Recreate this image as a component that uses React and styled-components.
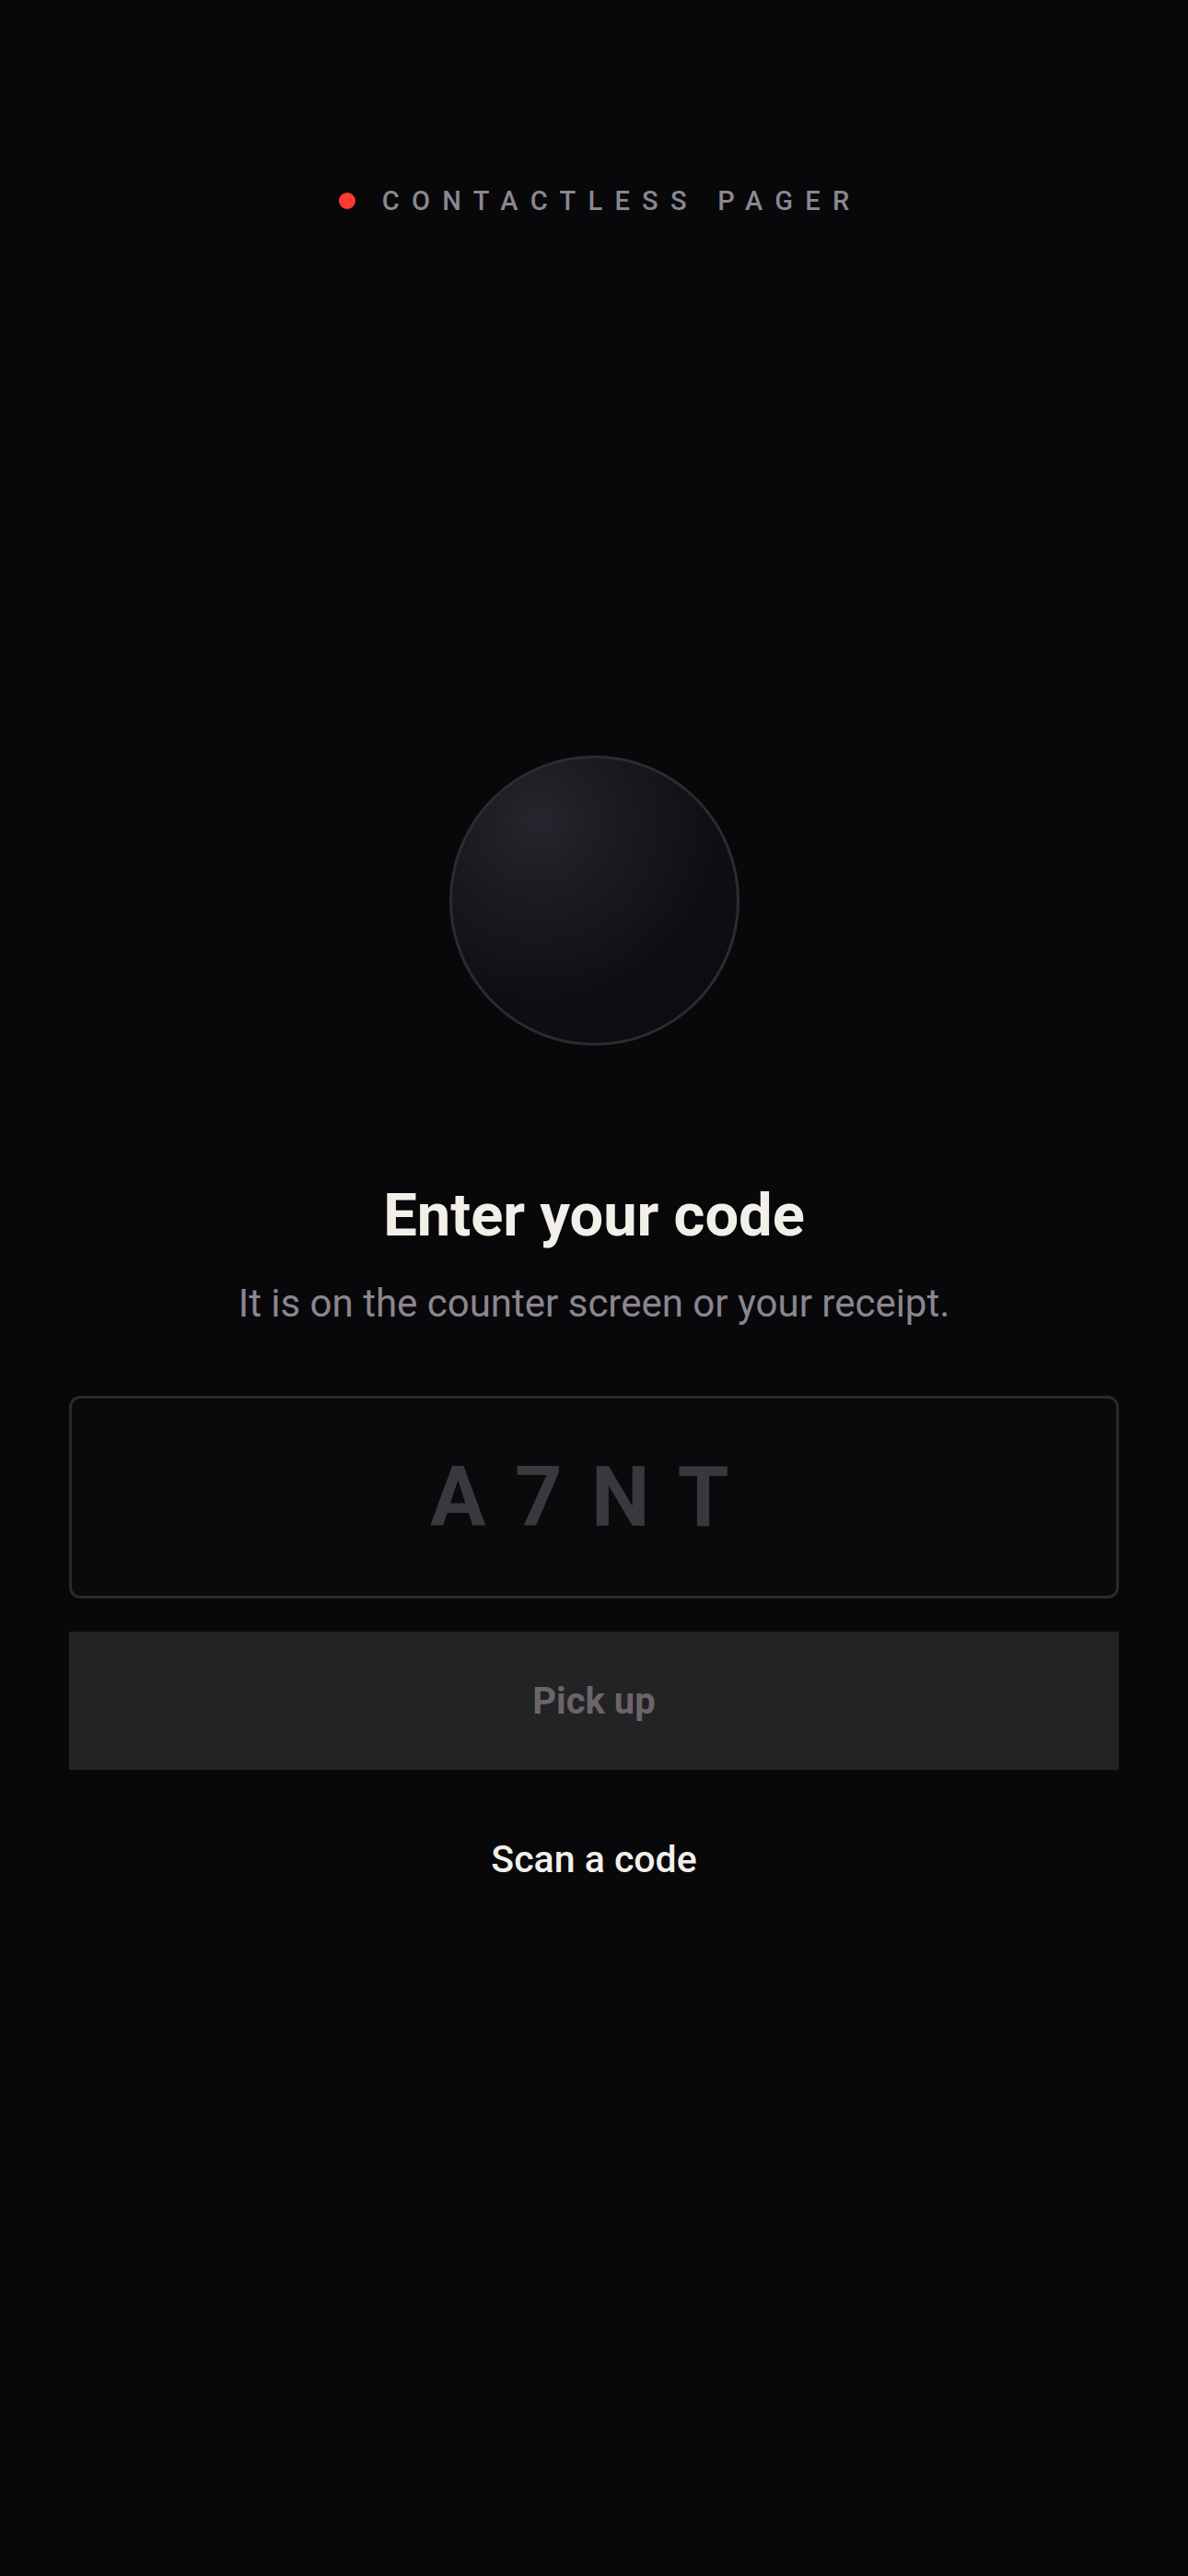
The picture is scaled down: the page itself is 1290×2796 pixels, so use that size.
import React from "react";
import styled, { createGlobalStyle } from "styled-components";

const Global = createGlobalStyle`
  html, body {
    margin: 0;
    padding: 0;
    background: #08080a;
  }
  body {
    font-family: Roboto, "Liberation Sans", Arial, sans-serif;
    -webkit-font-smoothing: antialiased;
  }
  * { box-sizing: border-box; }
`;

const Page = styled.div`
  min-height: 2796px;
  background: #08080a;
  display: flex;
  flex-direction: column;
  align-items: center;
  padding: 198px 75px 0;
`;

const Header = styled.div`
  height: 40px;
  display: flex;
  align-items: center;
  gap: 29px;
`;

const Dot = styled.span`
  width: 18px;
  height: 18px;
  border-radius: 50%;
  background: #ff3b30;
  flex: none;
`;

const Brand = styled.span`
  white-space: nowrap;
  font-size: 29px;
  line-height: 29px;
  font-weight: 500;
  letter-spacing: 13.3px;
  margin-right: -13.3px;
  color: #8a8790;
  text-transform: uppercase;
`;

const Orb = styled.div`
  margin-top: 582px;
  width: 315px;
  height: 315px;
  border-radius: 50%;
  border: 3px solid #2c2b30;
  background: radial-gradient(
    circle at 30% 22%,
    #27252d 0%,
    #1a191f 30%,
    #0f0f13 60%,
    #0b0b0e 100%
  );
  flex: none;
`;

const Title = styled.h1`
  margin: 146px 0 0;
  font-size: 65px;
  line-height: 76px;
  font-weight: 700;
  color: #f2efe9;
  text-align: center;
`;

const Subtitle = styled.p`
  margin: 29px 0 0;
  font-size: 42px;
  line-height: 58px;
  font-weight: 400;
  color: #8a8690;
  text-align: center;
`;

const CodeInput = styled.input`
  margin-top: 71px;
  width: 100%;
  height: 220px;
  border: 3px solid #2a2a2e;
  border-radius: 12px;
  background: #0a0a0d;
  outline: none;
  text-align: center;
  font-family: Roboto, "Liberation Sans", Arial, sans-serif;
  font-size: 90px;
  font-weight: 700;
  letter-spacing: 0.35em;
  color: #f2efe9;
  padding: 0;
  &::placeholder {
    color: #39383d;
    opacity: 1;
  }
`;

const PrimaryButton = styled.button`
  margin-top: 36px;
  width: 100%;
  height: 150px;
  border: none;
  border-radius: 0;
  background: #232225;
  color: #6b6468;
  font-family: Roboto, "Liberation Sans", Arial, sans-serif;
  font-size: 40px;
  font-weight: 700;
  cursor: default;
`;

const LinkButton = styled.button`
  margin-top: 70px;
  border: none;
  background: none;
  padding: 0;
  font-family: Roboto, "Liberation Sans", Arial, sans-serif;
  font-size: 41px;
  line-height: 54px;
  font-weight: 500;
  color: #f2efe9;
  cursor: pointer;
`;

export default function App() {
  return (
    <>
      <Global />
      <Page>
        <Header>
          <Dot />
          <Brand>Contactless Pager</Brand>
        </Header>
        <Orb />
        <Title>Enter your code</Title>
        <Subtitle>It is on the counter screen or your receipt.</Subtitle>
        <CodeInput placeholder="A7NT" maxLength={4} />
        <PrimaryButton disabled>Pick up</PrimaryButton>
        <LinkButton>Scan a code</LinkButton>
      </Page>
    </>
  );
}
